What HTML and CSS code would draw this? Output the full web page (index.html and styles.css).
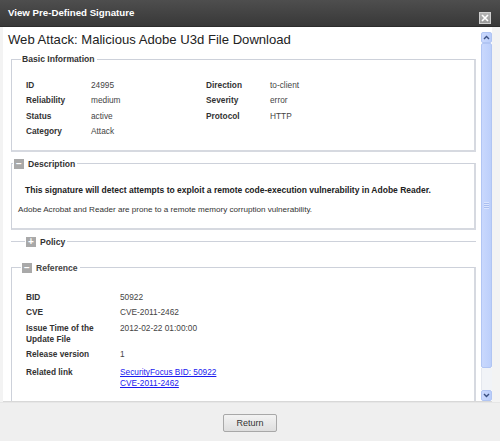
FILE: index.html
```html
<!DOCTYPE html>
<html>
<head>
<meta charset="utf-8">
<link rel="stylesheet" href="styles.css">
</head>
<body>
<div class="dialog">
  <div class="titlebar">
    <span class="title">View Pre-Defined Signature</span>
    <span class="close" aria-label="Close">
      <svg width="8" height="8" viewBox="0 0 8 8"><path d="M1 1L7 7M7 1L1 7" stroke="#fff" stroke-width="1.6"/></svg>
    </span>
  </div>
  <div class="main">
    <div class="pane">
      <div class="content">
        <h1 class="heading">Web Attack: Malicious Adobe U3d File Download</h1>

        <fieldset class="group">
          <legend class="legend">Basic Information</legend>
          <div class="basic-grid">
            <span class="lbl">ID</span><span class="val">24995</span>
            <span class="lbl">Direction</span><span class="val">to-client</span>
            <span class="lbl">Reliability</span><span class="val">medium</span>
            <span class="lbl">Severity</span><span class="val">error</span>
            <span class="lbl">Status</span><span class="val">active</span>
            <span class="lbl">Protocol</span><span class="val">HTTP</span>
            <span class="lbl">Category</span><span class="val">Attack</span>
          </div>
        </fieldset>

        <fieldset class="group desc">
          <legend class="legend"><span class="toggle">&minus;</span>Description</legend>
          <p class="desc-bold">This signature will detect attempts to exploit a remote code-execution vulnerability in Adobe Reader.</p>
          <p class="desc-text">Adobe Acrobat and Reader are prone to a remote memory corruption vulnerability.</p>
        </fieldset>

        <fieldset class="group collapsed">
          <legend class="legend"><span class="toggle">+</span>Policy</legend>
        </fieldset>

        <fieldset class="group ref">
          <legend class="legend light"><span class="toggle">&minus;</span>Reference</legend>
          <div class="ref-grid">
            <span class="lbl">BID</span><span class="val">50922</span>
            <span class="lbl">CVE</span><span class="val">CVE-2011-2462</span>
            <span class="lbl">Issue Time of the Update File</span><span class="val">2012-02-22 01:00:00</span>
            <span class="lbl">Release version</span><span class="val">1</span>
            <span class="lbl link-row">Related link</span>
            <span class="val link-row"><a href="#">SecurityFocus BID: 50922</a><br><a href="#">CVE-2011-2462</a></span>
          </div>
        </fieldset>
      </div>
      <div class="scrollbar">
        <div class="sb-btn">
          <svg width="7" height="5" viewBox="0 0 7 5"><path d="M1 4L3.5 1.5L6 4" fill="none" stroke="#3a4f80" stroke-width="1.4"/></svg>
        </div>
        <div class="sb-thumb"><span class="grip"></span></div>
        <div class="sb-track"></div>
        <div class="sb-btn">
          <svg width="7" height="5" viewBox="0 0 7 5"><path d="M1 1L3.5 3.5L6 1" fill="none" stroke="#3a4f80" stroke-width="1.4"/></svg>
        </div>
      </div>
    </div>
  </div>
  <div class="footer">
    <button class="btn" type="button">Return</button>
  </div>
</div>
</body>
</html>
```

FILE: styles.css
```css
html, body {
  margin: 0;
  padding: 0;
}
body {
  font-family: "Liberation Sans", Arial, sans-serif;
  background: #f0f0f0;
  color: #333;
}
.dialog {
  width: 500px;
  height: 441px;
  display: flex;
  flex-direction: column;
  overflow: hidden;
}
.titlebar {
  height: 27px;
  flex: none;
  display: flex;
  align-items: center;
  justify-content: space-between;
  padding: 0 9px 0 8px;
  box-sizing: border-box;
  background: linear-gradient(#4e4e4e, #383838);
  border-bottom: 1px solid #2c2c2c;
}
.title {
  color: #fff;
  font-weight: bold;
  font-size: 9.7px;
  margin-top: -1px;
}
.close {
  width: 12px;
  height: 12px;
  box-sizing: border-box;
  align-self: flex-end;
  margin-bottom: 2px;
  background: linear-gradient(#b4b4b4, #9a9a9a);
  border: 1px solid #cfcfcf;
  display: flex;
  align-items: center;
  justify-content: center;
}
.main {
  flex: 1;
  min-height: 0;
  display: flex;
  padding: 0 8px 0 3px;
  background: #f3f3f3;
}
.pane {
  flex: 1;
  display: flex;
  background: #fff;
  border-bottom: 1px solid #d8d8d8;
  min-height: 0;
}
.content {
  flex: 1;
  overflow: hidden;
  padding: 0 5px 0 5px;
}
.heading {
  font-family: "Liberation Sans", Arial, sans-serif;
  font-weight: normal;
  font-size: 13.1px;
  line-height: 16px;
  color: #222;
  margin: 5px 0 5px 0;
}
.group {
  margin: 0 0 0 3px;
  padding: 0 0 13px 14px;
  border: 1px solid #cdd1da;
  border-right: 2px solid #d6d9e0;
  border-bottom: 2px solid #d6d9e0;
  min-width: 0;
}
.legend {
  font-size: 8.6px;
  line-height: 12px;
  font-weight: bold;
  color: #333;
  padding: 0 2px 0 1px;
  margin-left: -5px;
  display: flex;
  align-items: center;
}
.legend.light {
  font-weight: bold;
  color: #444;
}
.toggle {
  width: 10px;
  height: 10px;
  background: #a9a9a9;
  color: #fff;
  font-size: 10px;
  line-height: 10px;
  text-align: center;
  font-weight: bold;
  margin-right: 4px;
  display: inline-block;
}
.basic-grid {
  display: grid;
  grid-template-columns: 65px 115px 64px 1fr;
  row-gap: 4.3px;
  padding-top: 15px;
  font-size: 8.3px;
  line-height: 11px;
}
.lbl {
  font-weight: bold;
  color: #333;
}
.val {
  color: #444;
}
.desc {
  margin-top: 6px;
  padding-left: 6px;
  padding-bottom: 12px;
}
.desc-bold {
  margin: 14px 0 0 7px;
  font-size: 8.5px;
  line-height: 12px;
  font-weight: bold;
  color: #222;
}
.desc-text {
  margin: 8px 0 0 0;
  font-size: 8.1px;
  line-height: 12px;
  color: #333;
}
.collapsed {
  margin-top: 6px;
  border: none;
  border-top: 1px solid #cdd1da;
  padding: 0 0 14px 14px;
}
.collapsed .legend {
  margin-left: 0;
}
.ref {
  padding-bottom: 14px;
}
.ref-grid {
  display: grid;
  grid-template-columns: 94px 1fr;
  row-gap: 4.5px;
  padding-top: 18px;
  font-size: 8.3px;
  line-height: 11px;
}
.ref-grid .lbl {
  padding-right: 6px;
}
.link-row {
  margin-top: 2.5px;
}
.ref-grid a {
  color: #1a1aef;
  text-decoration: underline;
}
.scrollbar {
  width: 11px;
  flex: none;
  display: flex;
  flex-direction: column;
  padding-top: 5px;
  background: #fff;
}
.sb-btn {
  height: 11px;
  box-sizing: border-box;
  background: linear-gradient(90deg, #cbd9fd, #b9cdfb);
  border: 1px solid #b1c5f3;
  border-radius: 2px;
  display: flex;
  align-items: center;
  justify-content: center;
}
.sb-thumb {
  height: 325px;
  box-sizing: border-box;
  background: linear-gradient(90deg, #c9d8fd, #bccffb);
  border: 1px solid #b1c5f3;
  border-radius: 2px;
  display: flex;
  align-items: center;
  justify-content: center;
}
.grip {
  width: 5px;
  height: 7px;
  background: repeating-linear-gradient(#dbe5fe 0 1px, #a9bef0 1px 2px);
}
.sb-track {
  flex: 1;
  background: #f1f3f7;
  border-left: 1px solid #e4e7ee;
}
.footer {
  height: 38px;
  flex: none;
  display: flex;
  align-items: center;
  justify-content: center;
  background: #efefef;
  border-top: 1px solid #e6e6e6;
}
.btn {
  width: 54px;
  height: 18px;
  margin-top: 1px;
  font-family: "Liberation Sans", Arial, sans-serif;
  font-size: 9px;
  color: #333;
  background: linear-gradient(#f3f3f3, #dedede);
  border: 1px solid #a8a8a8;
  border-radius: 2px;
  padding: 0;
}
```
